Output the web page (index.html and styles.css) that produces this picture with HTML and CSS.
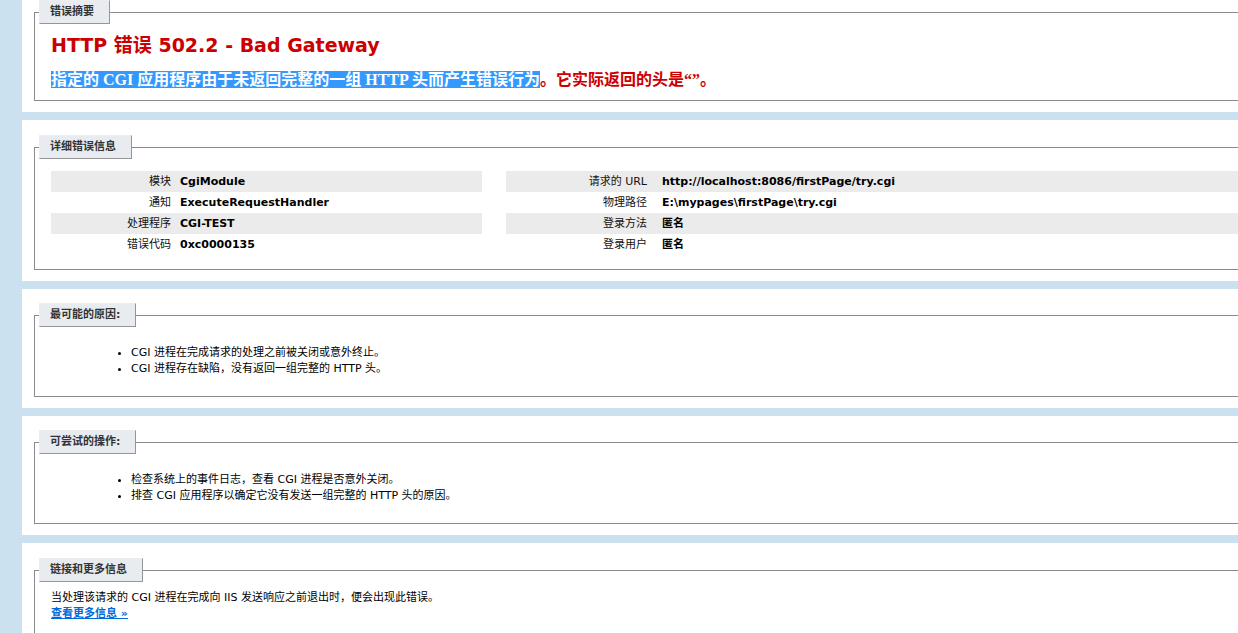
FILE: index.html
```html
<!DOCTYPE html>
<html lang="zh-CN">
<head>
<meta charset="utf-8">
<title>IIS 详细错误 - 502.2 - Bad Gateway</title>
<link rel="stylesheet" href="styles.css">
</head>
<body>
<div class="content">
  <div class="panel panel-summary">
    <fieldset class="box box-summary">
      <legend>错误摘要</legend>
      <h2 class="err-title">HTTP 错误 502.2 - Bad Gateway</h2>
      <h3 class="err-desc"><span class="sel">指定的 CGI 应用程序由于未返回完整的一组 HTTP 头而产生错误行为</span>。它实际返回的头是“”。</h3>
    </fieldset>
  </div>

  <div class="panel panel-details">
    <fieldset class="box box-details">
      <legend>详细错误信息</legend>
      <div class="details">
        <div class="details-left">
          <div class="row alt"><span class="lbl">模块</span><span class="val">CgiModule</span></div>
          <div class="row"><span class="lbl">通知</span><span class="val">ExecuteRequestHandler</span></div>
          <div class="row alt"><span class="lbl">处理程序</span><span class="val">CGI-TEST</span></div>
          <div class="row"><span class="lbl">错误代码</span><span class="val">0xc0000135</span></div>
        </div>
        <div class="details-right">
          <div class="row alt"><span class="lbl">请求的 URL</span><span class="val">http://localhost:8086/firstPage/try.cgi</span></div>
          <div class="row"><span class="lbl">物理路径</span><span class="val">E:\mypages\firstPage\try.cgi</span></div>
          <div class="row alt"><span class="lbl">登录方法</span><span class="val">匿名</span></div>
          <div class="row"><span class="lbl">登录用户</span><span class="val">匿名</span></div>
        </div>
      </div>
    </fieldset>
  </div>

  <div class="panel">
    <fieldset class="box">
      <legend>最可能的原因:</legend>
      <ul class="list">
        <li>CGI 进程在完成请求的处理之前被关闭或意外终止。</li>
        <li>CGI 进程存在缺陷，没有返回一组完整的 HTTP 头。</li>
      </ul>
    </fieldset>
  </div>

  <div class="panel">
    <fieldset class="box">
      <legend>可尝试的操作:</legend>
      <ul class="list">
        <li>检查系统上的事件日志，查看 CGI 进程是否意外关闭。</li>
        <li>排查 CGI 应用程序以确定它没有发送一组完整的 HTTP 头的原因。</li>
      </ul>
    </fieldset>
  </div>

  <div class="panel panel-links">
    <fieldset class="box">
      <legend>链接和更多信息</legend>
      <p class="more">当处理该请求的 CGI 进程在完成向 IIS 发送响应之前退出时，便会出现此错误。<br><a href="#" class="more-link">查看更多信息 »</a></p>
    </fieldset>
  </div>
</div>
</body>
</html>
```
FILE: styles.css
```css
html, body {
  margin: 0;
  padding: 0;
}
body {
  background: #CBE1EF;
  font-family: "DejaVu Sans", "Noto Sans CJK SC", sans-serif;
  font-size: 11px;
  color: #000;
  overflow: hidden;
}
.content {
  padding-left: 22px;
}
.panel {
  background: #fff;
  padding: 14px 0 11px 12px;
  margin-bottom: 8px;
}
.panel-summary {
  padding-top: 0;
}
.panel-details,
.panel-links {
  padding-top: 15px;
}
.box {
  margin: 0;
  border: 1px solid #8a8a8a;
  border-right: 0;
  padding: 0 0 13px 16px;
  min-width: 0;
}
legend {
  margin-left: -12px;
  padding: 4px 15px 4px 10px;
  line-height: 14px;
  border-top: 1px solid #ededed;
  border-left: 1px solid #ededed;
  border-right: 1px solid #969696;
  border-bottom: 1px solid #969696;
  background: #E8ECF0;
  color: #333;
  font-weight: bold;
  font-size: 11px;
}
.box-summary {
  padding-bottom: 10px;
}
.box-details {
  padding-bottom: 14px;
}
.err-title {
  margin: 10px 0 0 0;
  font-size: 19px;
  line-height: 23px;
  color: #CC0000;
  font-weight: bold;
}
.err-desc {
  margin: 13px 0 0 0;
  font-family: "Liberation Serif", "Noto Sans CJK SC", serif;
  font-size: 16px;
  line-height: 20px;
  color: #CC0000;
  font-weight: bold;
}
.sel {
  background: #3399FF;
  color: #fff;
}
.details {
  display: flex;
  padding-top: 12px;
}
.details-left {
  width: 431px;
  margin-right: 24px;
  flex: none;
}
.details-right {
  flex: 1;
}
.row {
  display: grid;
  grid-template-columns: 120px 1fr;
  column-gap: 9px;
  line-height: 15px;
  padding: 3px 0;
}
.details-right .row {
  grid-template-columns: 141px 1fr;
  column-gap: 15px;
}
.row.alt {
  background: #ebebeb;
}
.lbl {
  text-align: right;
  font-weight: normal;
  color: #111;
}
.val {
  font-weight: bold;
  white-space: nowrap;
}
.list {
  margin: 18px 0 6px 0;
  padding-left: 80px;
  line-height: 16px;
}
.more {
  margin: 8px 0 0 0;
  line-height: 16px;
}
.more-link {
  color: #0068D8;
  font-weight: bold;
  text-decoration: underline;
}
```
